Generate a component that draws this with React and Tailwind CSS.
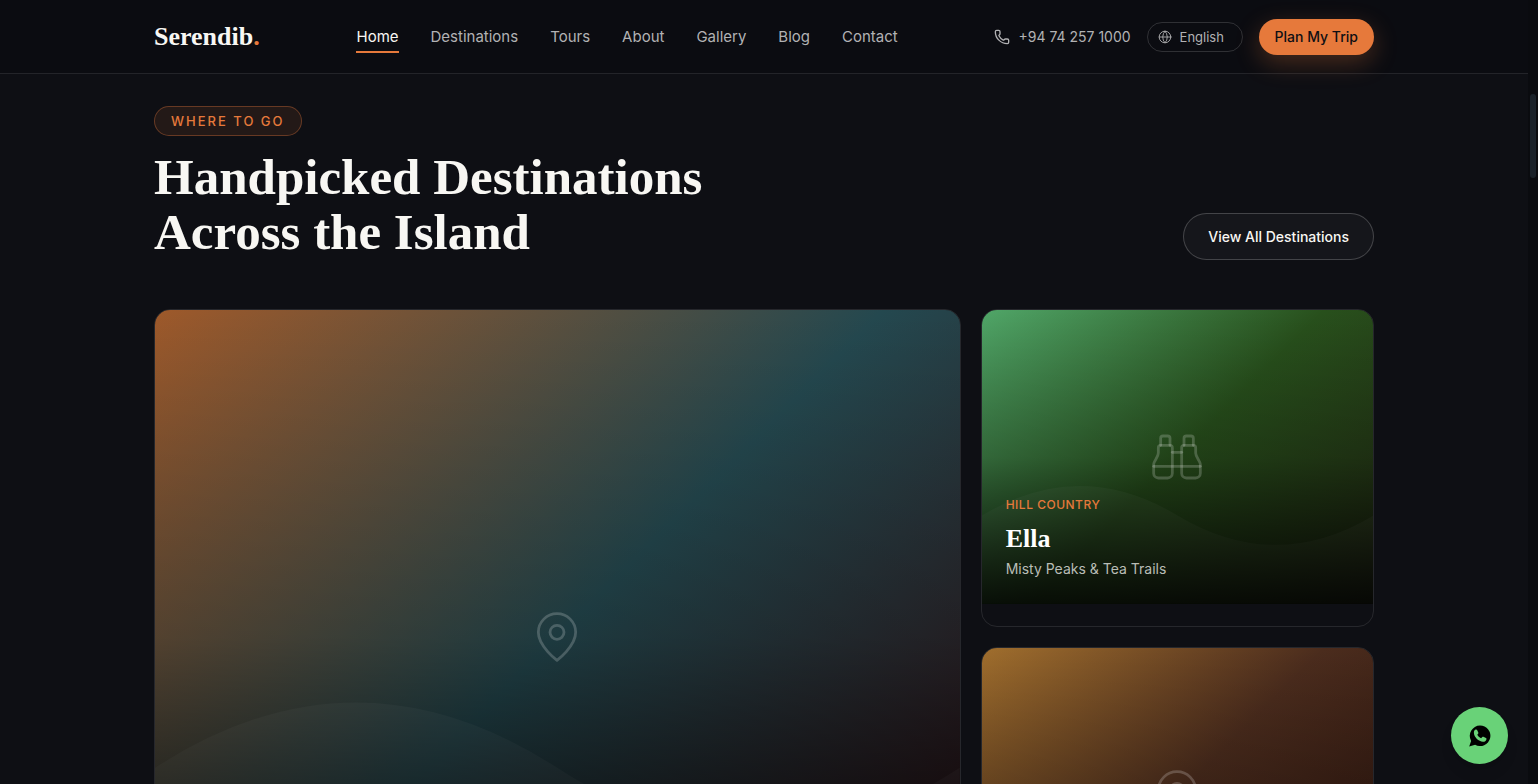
/**
 * App.jsx - Serendib home page, destinations section
 */

import React from 'react';
import { Binoculars, Globe, Phone } from 'lucide-react';

const NAV_LINKS = ['Home', 'Destinations', 'Tours', 'About', 'Gallery', 'Blog', 'Contact'];

const PinIcon = ({ className }) => (
  <svg
    className={className}
    viewBox="0 0 24 24"
    fill="none"
    stroke="currentColor"
    strokeWidth="1.2"
    strokeLinecap="round"
    strokeLinejoin="round"
    aria-hidden="true"
  >
    <path d="M20 10c0 6-8 12-8 12s-8-6-8-12a8 8 0 0 1 16 0Z" />
    <circle cx="12" cy="10" r="3" />
  </svg>
);

// Solid bubble with the handset cut out of it
const WhatsappIcon = ({ className }) => (
  <svg className={className} viewBox="0 0 24 24" aria-hidden="true">
    <path fill="currentColor" d="M12 1.5a10.3 10.3 0 0 0-8.900 15.400L1.200 22.400l5.900-1.600A10.300 10.300 0 1 0 12 1.500Z" />
    <path
      fill="#69d278"
      d="M7.600 5.600c.5-.3 1.200-.2 1.500.4l1.200 2.500c.2.500.1.900-.2 1.300l-.8 1c.7 1.500 2 2.800 3.800 3.500l1.200-1.300c.3-.3.7-.4 1.100-.2l2.600 1.300c.5.300.6.700.4 1.300-.5 1.600-1.900 2.400-3.400 2.300-4.500-.4-8.700-4.200-9.100-8.700-.1-1.500.5-2.800 1.700-3.400Z"
    />
  </svg>
);

const Header = () => (
  <header className="shrink-0 border-b border-white/10 bg-[#0b0c11]">
    <div className="mx-auto flex h-[73px] max-w-[1220px] items-center justify-between">
      <a href="#home" className="font-['Liberation_Serif',serif] text-[26px] leading-8 font-bold text-[#f8f7f3]">
        Serendib<span className="text-[#e6793b]">.</span>
      </a>

      <nav className="flex items-center gap-8">
        {NAV_LINKS.map((label, i) => (
          <a
            key={label}
            href={`#${label.toLowerCase()}`}
            className={
              i === 0
                ? 'border-y-2 border-t-transparent border-b-[#e6793b] py-1 text-[15px] leading-5 text-[#f8f7f3]'
                : 'py-1 text-[15px] leading-5 text-[#b2b2b4]'
            }
          >
            {label}
          </a>
        ))}
      </nav>

      <div className="flex items-center gap-4">
        <a href="tel:+94742571000" className="flex items-center gap-2 text-sm text-[#b2b2b4]">
          <Phone className="size-4" strokeWidth={2} />
          +94 74 257 1000
        </a>
        <label className="flex h-[30px] w-24 items-center gap-2 rounded-full border border-white/15 pl-[10px] text-[#b2b2b4]">
          <Globe className="size-[14px]" strokeWidth={1.5} />
          <select aria-label="Language" className="w-14 appearance-none bg-transparent text-[13px] leading-4 outline-none">
            <option>English</option>
          </select>
        </label>
        <button
          type="button"
          className="h-9 rounded-full bg-[#e6793b] px-4 text-sm font-medium text-[#0e0f14] shadow-[0_8px_24px_rgba(230,121,59,0.28)]"
        >
          Plan My Trip
        </button>
      </div>
    </div>
  </header>
);

// Gradient backdrop with the hill silhouette and the bottom shade
const Scene = ({ className, children }) => (
  <div className={`relative flex items-center justify-center overflow-hidden ${className}`}>
    <svg className="absolute inset-0 size-full" viewBox="0 0 100 100" preserveAspectRatio="none" aria-hidden="true">
      <path d="M0 70 Q25 50 50 70 T100 70 V100 H0 Z" fill="white" fillOpacity="0.05" />
    </svg>
    <div className="absolute inset-0 bg-linear-to-t from-black/85 via-black/20 to-transparent" />
    <div className="relative text-white/20">{children}</div>
  </div>
);

const Destinations = () => (
  <section className="mx-auto w-full max-w-[1220px] pt-8">
    <div className="flex items-end justify-between">
      <div className="flex flex-col items-start gap-[14px]">
        <span className="flex h-[30px] items-center rounded-full border border-[#e6793b]/35 bg-[#e6793b]/10 px-4 text-[13px] leading-4 font-medium tracking-[2px] text-[#e6793b]">
          WHERE TO GO
        </span>
        <h2 className="font-['Liberation_Serif',serif] text-[51px] leading-[55px] font-bold text-[#f8f7f3]">
          Handpicked Destinations
          <br />
          Across the Island
        </h2>
      </div>
      <a
        href="#destinations"
        className="flex h-[47px] items-center rounded-full border border-white/20 bg-white/3 px-6 text-sm font-medium text-[#f8f7f3]"
      >
        View All Destinations
      </a>
    </div>

    <div className="mt-[49px] grid auto-rows-[318px] grid-cols-12 gap-5">
      <a href="#sigiriya" className="col-span-8 row-span-2 flex overflow-hidden rounded-2xl border border-white/10">
        <Scene className="flex-1 bg-linear-[135deg,#9e592a_0%,#24484f_50%,#300c10_100%]">
          <PinIcon className="size-14" />
        </Scene>
      </a>

      <a href="#ella" className="relative col-span-4 overflow-hidden rounded-2xl border border-white/10">
        <Scene className="aspect-4/3 bg-linear-[135deg,#50a668_0%,#28501c_50%,#222a12_100%]">
          <Binoculars className="size-14" strokeWidth={1.2} />
        </Scene>
        <div className="absolute inset-x-6 bottom-[47px]">
          <p className="text-xs leading-5 font-medium tracking-[0.5px] text-[#e6793b]">HILL COUNTRY</p>
          <h3 className="mt-2 font-['Liberation_Serif',serif] text-[26px] leading-8 font-bold text-white">Ella</h3>
          <p className="mt-1 text-sm text-[#b9bdb6]">Misty Peaks &amp; Tea Trails</p>
        </div>
      </a>

      <a href="#kandy" className="col-span-4 overflow-hidden rounded-2xl border border-white/10">
        <Scene className="aspect-4/3 bg-linear-[135deg,#a06e2d_0%,#4b2c1d_50%,#2c130d_100%]">
          <PinIcon className="size-14" />
        </Scene>
      </a>
    </div>
  </section>
);

const App = () => {
  return (
    <div className="relative flex h-screen overflow-hidden bg-[#0e0f14] font-['Inter',sans-serif]">
      <div className="flex min-w-0 flex-1 flex-col">
        <Header />
        <Destinations />
      </div>

      {/* Scroll track */}
      <div className="w-[10px] bg-[#0a0b0f] px-[2px] pt-[94px]">
        <div className="h-[84px] rounded-full bg-[#1a2129]" />
      </div>

      <a
        href="#whatsapp"
        aria-label="Chat on WhatsApp"
        className="absolute right-[30px] bottom-5 flex size-[57px] items-center justify-center rounded-full bg-[#69d278] text-black shadow-lg"
      >
        <WhatsappIcon className="size-6" />
      </a>
    </div>
  );
};

export default App;
